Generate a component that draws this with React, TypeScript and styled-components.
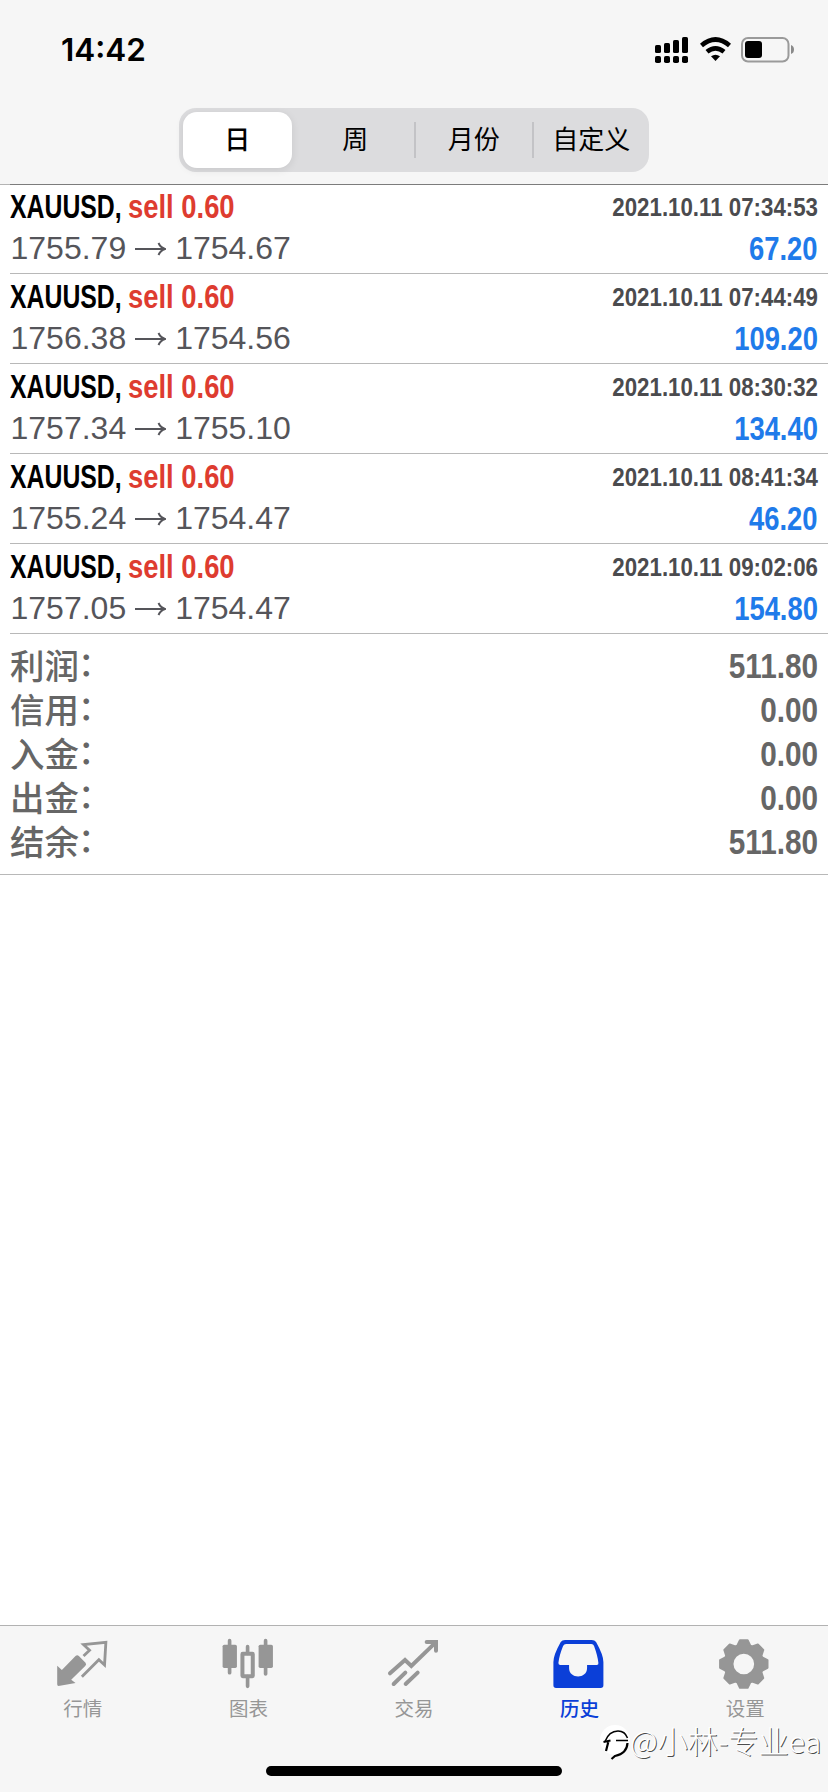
import React from "react";
import styled, { createGlobalStyle } from "styled-components";

const GlobalStyle = createGlobalStyle`
  * { box-sizing: border-box; }
  body { margin: 0; background: #fff; }
`;

const cjk = `"Noto Sans CJK SC", sans-serif`;
const sans = `"Liberation Sans", ${cjk}`;

const Screen = styled.div`
  width: 828px;
  height: 1792px;
  position: relative;
  overflow: hidden;
  display: flex;
  flex-direction: column;
  background: #fff;
  font-family: ${sans};
`;

const Header = styled.header`
  height: 185px;
  flex: none;
  background: #f6f6f6;
  border-bottom: 1px solid #b4b4b4;
  display: flex;
  flex-direction: column;
  align-items: center;
`;

const StatusBar = styled.div`
  width: 100%;
  height: 108px;
  padding: 30px 33px 0 60px;
  display: flex;
  justify-content: space-between;
  align-items: flex-start;
`;

const Clock = styled.span`
  padding-left: 1px;
  font: 600 31.5px/40px Inter, sans-serif;
  color: #000;
`;

const StatusIcons = styled.svg`
  width: 140px;
  height: 26px;
  margin-top: 7px;
`;

const Segmented = styled.div`
  width: 470px;
  height: 64px;
  display: grid;
  grid-template-columns: repeat(4, 1fr);
  align-items: center;
  padding: 4px 0;
  border-radius: 17px;
  background: #dcdcde;
`;

const Segment = styled.button<{ $active?: boolean; $divided?: boolean }>`
  height: ${(p) => (p.$active ? 56 : 36)}px;
  margin: ${(p) => (p.$active ? "0 5px 0 4px" : "0")};
  padding: 0 0 4px;
  border: 0;
  border-left: ${(p) => (p.$divided ? "2px solid #c3c3c6" : "0")};
  border-radius: ${(p) => (p.$active ? 14 : 0)}px;
  background: ${(p) => (p.$active ? "#fff" : "transparent")};
  box-shadow: ${(p) => (p.$active ? "0 2px 8px rgba(0,0,0,.09)" : "none")};
  font: ${(p) => (p.$active ? 500 : 400)} 26px/32px ${cjk};
  color: #000;
`;

const Deals = styled.ul`
  list-style: none;
  margin: -1px 0 0 10px;
  padding: 0;
  box-shadow: inset 0 1px #7c7c7c;
`;

const Deal = styled.li`
  height: 90px;
  padding: 2px 10px 0 0;
  border-bottom: 1px solid #b8b8b8;
`;

const DealLine = styled.div`
  height: 41px;
  display: flex;
  justify-content: space-between;
  white-space: nowrap;
`;

const Heading = styled.div`
  display: flex;
  font: 700 33px/42px ${sans};
`;

/* The condensed faces are the regular bold narrowed horizontally. */
const Symbol = styled.span`
  width: 118px;
  transform: scaleX(0.752);
  transform-origin: left;
  color: #000;
`;

const Side = styled.span`
  transform: scaleX(0.83);
  transform-origin: left;
  color: #de3c30;
`;

const Time = styled.span`
  font: 700 26px/42px ${sans};
  transform: scaleX(0.857);
  transform-origin: right;
  color: #4b4b4e;
`;

const Prices = styled.span`
  display: flex;
  align-items: center;
  height: 43px;
  padding-left: 0.5px;
  font-size: 32px;
  line-height: 43px;
  color: #55555a;
`;

const Arrow = styled.svg`
  width: 31px;
  height: 14px;
  margin: 0 9px;
`;

const Profit = styled.span`
  font: 700 33px/44px ${sans};
  transform: scaleX(0.83);
  transform-origin: right;
  color: #1f7bea;
`;

const Summary = styled.dl`
  margin: 0;
  height: 241px;
  padding: 9px 10px 0;
  border-bottom: 1px solid #b8b8b8;
`;

const SummaryRow = styled.div`
  height: 44px;
  display: flex;
  justify-content: space-between;
  color: #666;
`;

const Label = styled.dt`
  display: flex;
  font: 500 34.5px/42px ${cjk};
`;

const Colon = styled.span`
  margin-left: -1px;
  font-size: 33px;
  line-height: 38px;
`;

const Amount = styled.dd`
  margin: 0;
  font: 700 35px/46px ${sans};
  transform: scaleX(0.85);
  transform-origin: right;
`;

const TabBar = styled.nav`
  margin-top: auto;
  height: 167px;
  flex: none;
  background: #f6f6f6;
  border-top: 1px solid #b2b2b2;
  display: flex;
  flex-direction: column;
  align-items: center;
  justify-content: space-between;
  padding-bottom: 16px;
`;

const Tabs = styled.div`
  width: 100%;
  display: grid;
  grid-template-columns: repeat(5, 1fr);
`;

const Tab = styled.a<{ $active?: boolean }>`
  display: flex;
  flex-direction: column;
  align-items: center;
  padding-top: 10px;
  color: ${(p) => (p.$active ? "#0b3fd8" : "#969696")};
  font: ${(p) => (p.$active ? 500 : 400)} 19.5px/28px ${cjk};
`;

const TabIcon = styled.svg`
  width: 54px;
  height: 54px;
  margin-bottom: 4px;
`;

const HomeIndicator = styled.div`
  width: 296px;
  height: 10px;
  border-radius: 5px;
  background: #000;
`;

const Watermark = styled.div`
  position: absolute;
  left: 600px;
  top: 1719px;
  display: flex;
  align-items: center;
  font: 300 30.3px/42px ${cjk};
  color: #fff;
  text-shadow: 1px 1px 0 rgba(0, 0, 0, 0.7);
  white-space: nowrap;
`;

const WatermarkLogo = styled.svg`
  width: 30px;
  height: 40px;
`;

const deals = [
  ["1755.79", "1754.67", "2021.10.11 07:34:53", "67.20"],
  ["1756.38", "1754.56", "2021.10.11 07:44:49", "109.20"],
  ["1757.34", "1755.10", "2021.10.11 08:30:32", "134.40"],
  ["1755.24", "1754.47", "2021.10.11 08:41:34", "46.20"],
  ["1757.05", "1754.47", "2021.10.11 09:02:06", "154.80"],
];

const totals = [
  ["利润", "511.80"],
  ["信用", "0.00"],
  ["入金", "0.00"],
  ["出金", "0.00"],
  ["结余", "511.80"],
];

function gearPath(cx: number, cy: number) {
  const pts: string[] = [];
  for (let i = 0; i < 8; i++) {
    const a = (i * Math.PI) / 4 - Math.PI / 2;
    [[-0.34, 58.5], [-0.16, 72], [0.16, 72], [0.34, 58.5]].forEach(([d, r]) =>
      pts.push(`${(cx + r * Math.cos(a + d)).toFixed(1)} ${(cy + r * Math.sin(a + d)).toFixed(1)}`)
    );
  }
  return `M${pts.join("L")}Z M${cx - 34} ${cy}a34 34 0 1 0 68 0a34 34 0 1 0 -68 0Z`;
}

const tabs = [
  {
    label: "行情",
    box: "167.4 78 162 162",
    icon: (
      <>
        <path d="M171 167L185 180L226 138Q231 133 236 138L256 158Q260 163 255 168L213 209L226 219L175 228Q171 228 171 223Z" fill="currentColor" />
        <path d="M250 138L268 121L250 104L317 97L313 165L296 149L245 200" fill="none" stroke="currentColor" strokeWidth="8.500" />
      </>
    ),
  },
  {
    label: "图表",
    box: "664.2 78 162 162",
    icon: (
      <>
        <path d="M690 92V188M798 92V192M744 110V130M744 200V229" stroke="currentColor" strokeWidth="11" strokeLinecap="round" />
        <rect x="669" y="104" width="43" height="70" rx="5" fill="currentColor" />
        <rect x="777" y="104" width="43" height="70" rx="5" fill="currentColor" />
        <rect x="728.500" y="131.500" width="31" height="67" rx="1" fill="none" stroke="currentColor" strokeWidth="12" strokeLinejoin="round" />
      </>
    ),
  },
  {
    label: "交易",
    box: "261 78 162 162",
    icon: (
      <path
        d="M270 190L315 150L334 168L404 100M380 96H408V122M281 222L316 188M317 222L353 188"
        fill="none"
        stroke="currentColor"
        strokeWidth="12"
        strokeLinecap="round"
        strokeLinejoin="miter"
      />
    ),
  },
  {
    label: "历史",
    box: "757.8 78 162 162",
    active: true,
    icon: (
      <path
        fillRule="evenodd"
        fill="currentColor"
        d="M794 90H874Q883 90 887 96Q909 135 909 156V226Q909 234 901 234H767Q759 234 759 226V156Q759 135 781 96Q785 90 794 90ZM797 102Q791 102 788 108Q776 138 774 159Q774 165 780 165H806V174C806 208 860 208 860 174V165H889Q895 165 894 159Q892 138 881 108Q879 102 873 102Z"
      />
    ),
  },
  {
    label: "设置",
    box: "474.6 78 162 162",
    icon: <path fillRule="evenodd" fill="currentColor" stroke="currentColor" strokeWidth="6" strokeLinejoin="round" d={gearPath(552, 162)} />,
  },
];

export default function App() {
  return (
    <Screen>
      <GlobalStyle />
      <Header>
        <StatusBar>
          <Clock>14:42</Clock>
          <StatusIcons viewBox="655 37 140 26">
            {[45, 43, 40, 37].map((y, i) => (
              <React.Fragment key={y}>
                <rect x={655 + i * 9} y={y} width="6" height={53 - y} rx="1.6" />
                <rect x={655 + i * 9} y="56" width="6" height="7" rx="1.8" />
              </React.Fragment>
            ))}
            <path d="M701.500 45.500Q715.500 33.500 729.500 45.500" fill="none" stroke="#000" strokeWidth="4.600" />
            <path d="M707 51.800Q715.500 44.800 724 51.800" fill="none" stroke="#000" strokeWidth="4.600" />
            <path d="M711 56.300Q715.500 53 720 56.300L715.500 61Z" />
            <rect x="742" y="38" width="46.500" height="23.500" rx="6" fill="none" stroke="#9a9a9a" strokeWidth="2" />
            <rect x="745" y="41" width="17" height="17" rx="3" />
            <path d="M791 45Q794 46 794 49.500T791 54Z" fill="#8a8a8a" />
          </StatusIcons>
        </StatusBar>
        <Segmented>
          <Segment $active>日</Segment>
          <Segment>周</Segment>
          <Segment $divided>月份</Segment>
          <Segment $divided>自定义</Segment>
        </Segmented>
      </Header>
      <Deals>
        {deals.map(([open, close, time, profit]) => (
          <Deal key={time}>
            <DealLine>
              <Heading>
                <Symbol>XAUUSD,</Symbol>
                <Side>sell 0.60</Side>
              </Heading>
              <Time>{time}</Time>
            </DealLine>
            <DealLine>
              <Prices>
                {open}
                <Arrow viewBox="0 0 31 14">
                  <path d="M0 7H30M23.500 1Q25.500 5.500 30 7Q25.500 8.500 23.500 13" fill="none" stroke="currentColor" strokeWidth="2" />
                </Arrow>
                {close}
              </Prices>
              <Profit>{profit}</Profit>
            </DealLine>
          </Deal>
        ))}
      </Deals>
      <Summary>
        {totals.map(([label, amount]) => (
          <SummaryRow key={label}>
            <Label>
              {label}
              <Colon>：</Colon>
            </Label>
            <Amount>{amount}</Amount>
          </SummaryRow>
        ))}
      </Summary>
      <TabBar>
        <Tabs>
          {tabs.map((t) => (
            <Tab key={t.label} $active={t.active}>
              <TabIcon viewBox={t.box}>{t.icon}</TabIcon>
              {t.label}
            </Tab>
          ))}
        </Tabs>
        <HomeIndicator />
      </TabBar>
      <Watermark>
        <WatermarkLogo viewBox="0 0 30 40">
          <circle cx="15" cy="20" r="15" fill="#fff" />
          <path d="M5 21.500Q9 11 18 11Q25 11 27.500 18M16 20.500H28" fill="none" stroke="#000" strokeWidth="1.500" />
          <path d="M3.500 22L10.500 20.500M8.300 22L6 31M27.500 23C27 32 20 35 15 36L11.500 39" fill="none" stroke="#000" strokeWidth="2.200" />
        </WatermarkLogo>
        @小林-专业ea
      </Watermark>
    </Screen>
  );
}
